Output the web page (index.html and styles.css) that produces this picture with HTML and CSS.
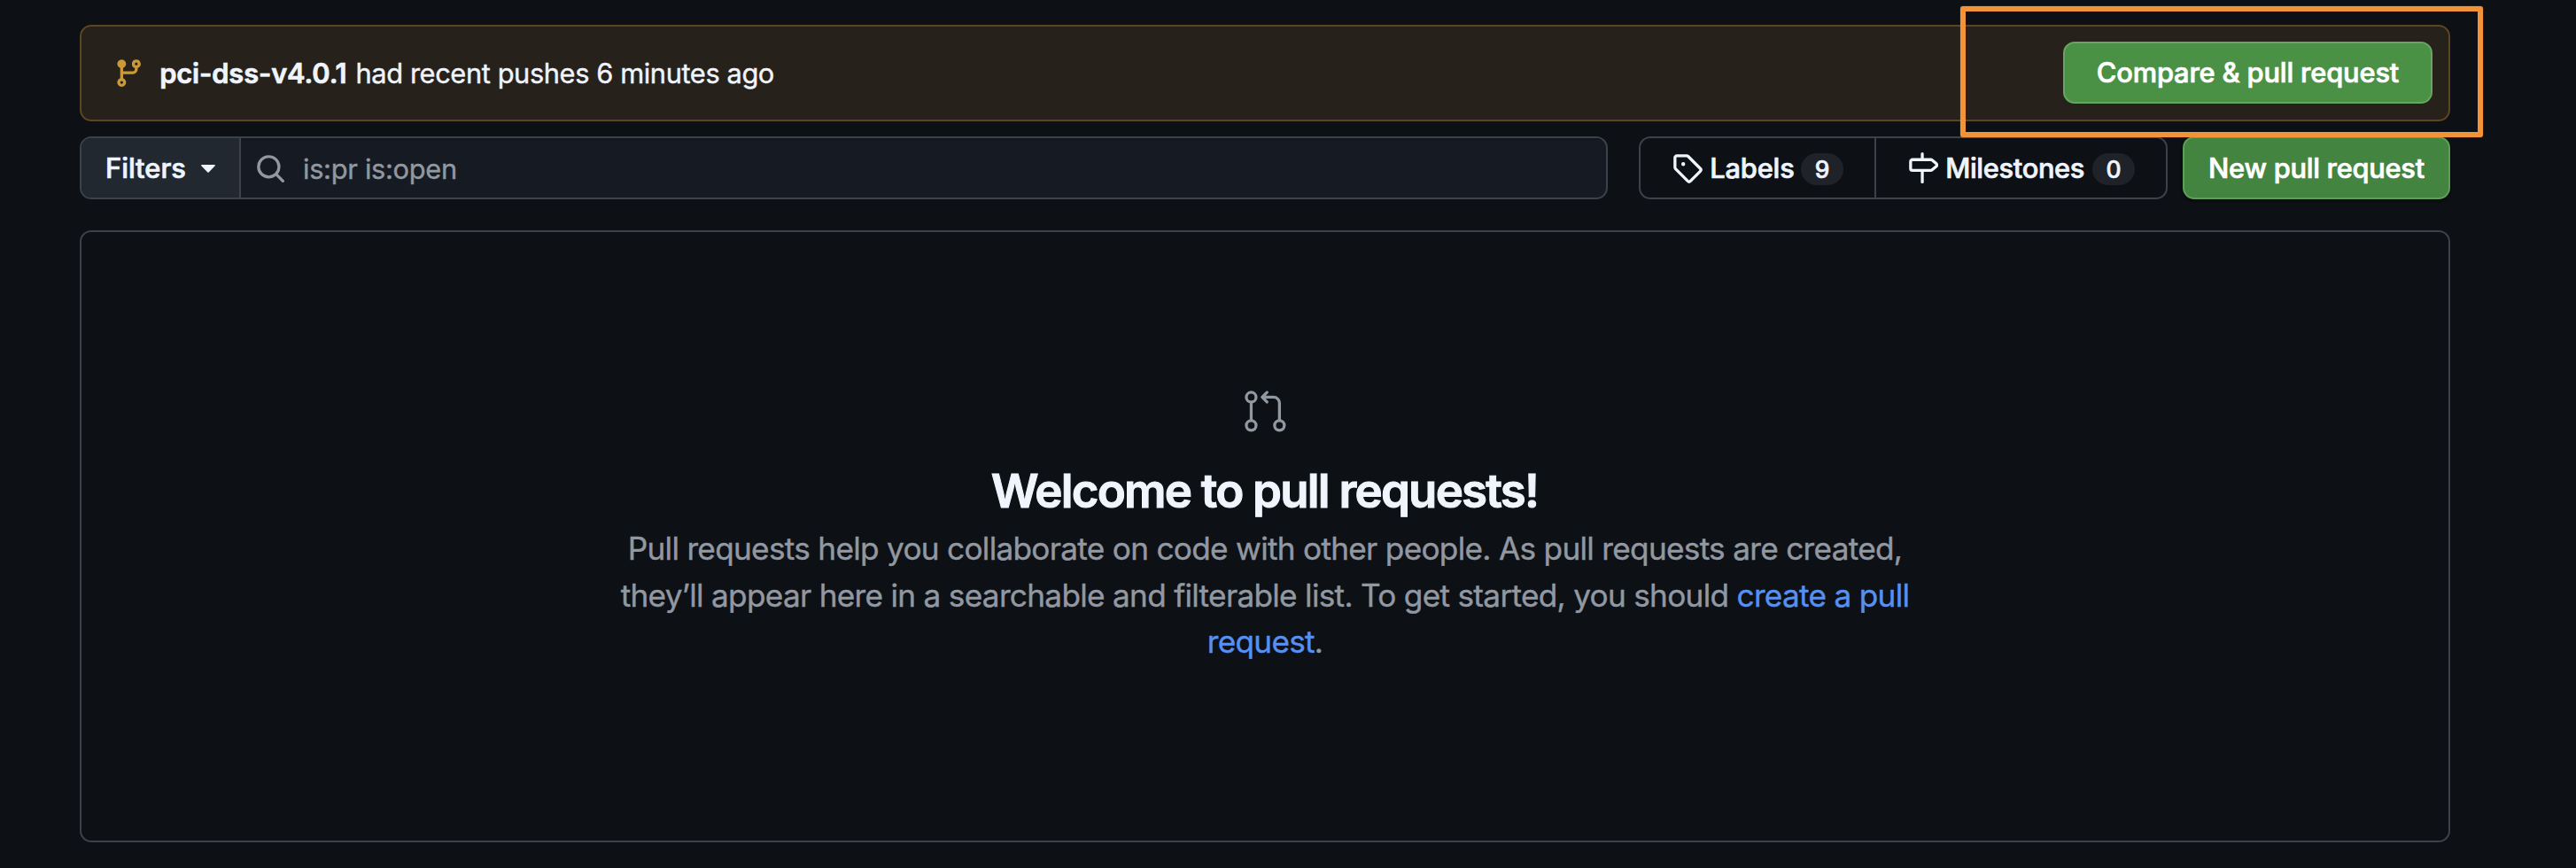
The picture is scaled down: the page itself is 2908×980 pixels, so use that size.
FILE: index.html
```html
<!DOCTYPE html>
<html lang="en">
<head>
<meta charset="utf-8">
<title>Pull requests</title>
<link rel="stylesheet" href="styles.css">
</head>
<body>
<main class="page">
  <section class="banner">
    <svg class="icon icon-branch" viewBox="0 0 16 16"><path d="M11.75 2.5a.75.75 0 100 1.5.75.75 0 000-1.5zm-2.25.75a2.25 2.25 0 113 2.122V6A2.5 2.5 0 0110 8.5H5v2.128a2.251 2.251 0 11-1.5 0V5.372a2.25 2.25 0 111.5 0V7h5a1 1 0 001-1v-.628A2.25 2.25 0 019.5 3.25zM4.25 12a.75.75 0 100 1.5.75.75 0 000-1.5zM3.5 3.25a.75.75 0 111.5 0 .75.75 0 01-1.5 0z"/></svg>
    <p class="banner-text"><strong class="branch">pci-dss-v4.0.1</strong><span class="pushes">had recent pushes 6 minutes ago</span></p>
    <button class="btn btn-compare">Compare &amp; pull request</button>
    <div class="callout"></div>
  </section>

  <div class="toolbar">
    <div class="search">
      <button class="filters">Filters<svg class="caret" viewBox="0 0 16 9"><path d="M.8 0h14.4c.7 0 1 .8.5 1.3L8.7 8.4a1 1 0 0 1-1.4 0L.3 1.3C-.2.8.1 0 .8 0Z"/></svg></button>
      <div class="field">
        <svg class="icon" viewBox="0 0 16 16"><path d="M10.68 11.74a6 6 0 0 1-7.922-8.982 6 6 0 0 1 8.982 7.922l3.04 3.04a.749.749 0 0 1-.326 1.275.749.749 0 0 1-.734-.215ZM11.5 7a4.499 4.499 0 1 0-8.997 0A4.499 4.499 0 0 0 11.5 7Z"/></svg>
        <span class="query">is:pr is:open</span>
      </div>
    </div>
    <nav class="subnav">
      <a class="subnav-item labels"><svg class="icon" viewBox="0 0 16 16"><path d="M1 7.775V2.75C1 1.784 1.784 1 2.75 1h5.025c.464 0 .91.184 1.238.513l6.25 6.25a1.75 1.75 0 0 1 0 2.474l-5.026 5.026a1.75 1.75 0 0 1-2.474 0l-6.25-6.25A1.752 1.752 0 0 1 1 7.775Zm1.5 0c0 .066.026.13.073.177l6.25 6.25a.25.25 0 0 0 .354 0l5.025-5.025a.25.25 0 0 0 0-.354l-6.25-6.25a.25.25 0 0 0-.177-.073H2.75a.25.25 0 0 0-.25.25ZM6 5a1 1 0 1 1 0 2 1 1 0 0 1 0-2Z"/></svg><span class="name">Labels</span><span class="count">9</span></a>
      <a class="subnav-item milestones"><svg class="icon" viewBox="0 0 16 16"><path d="M7.75 0a.75.75 0 0 1 .75.75V3h3.634c.414 0 .814.147 1.13.414l2.07 1.75a1.75 1.75 0 0 1 0 2.672l-2.07 1.75a1.75 1.75 0 0 1-1.13.414H8.5v5.25a.75.75 0 0 1-1.5 0V10H2.75A1.75 1.75 0 0 1 1 8.25v-3.5C1 3.784 1.784 3 2.75 3H7V.75A.75.75 0 0 1 7.75 0Zm4.384 8.5a.25.25 0 0 0 .161-.059l2.07-1.75a.25.25 0 0 0 0-.382l-2.07-1.75a.25.25 0 0 0-.161-.059H2.75a.25.25 0 0 0-.25.25v3.5c0 .138.112.25.25.25h9.384Z"/></svg><span class="name">Milestones</span><span class="count">0</span></a>
    </nav>
    <button class="btn btn-new">New pull request</button>
  </div>

  <section class="blankslate">
    <svg class="icon-pr" viewBox="0 0 24 24"><path d="M16 19.25a3.25 3.25 0 1 1 6.5 0 3.25 3.25 0 0 1-6.5 0Zm-14.5 0a3.25 3.25 0 1 1 6.5 0 3.25 3.25 0 0 1-6.5 0Zm0-14.5a3.25 3.25 0 1 1 6.5 0 3.25 3.25 0 0 1-6.5 0ZM4.75 3a1.75 1.75 0 1 0 .001 3.501A1.75 1.75 0 0 0 4.75 3Zm0 14.5a1.75 1.75 0 1 0 .001 3.501A1.75 1.75 0 0 0 4.75 17.5Zm14.5 0a1.75 1.75 0 1 0 .001 3.501 1.75 1.75 0 0 0-.001-3.501Z"/><path d="M13.405 1.72a.75.75 0 0 1 0 1.06L12.185 4h4.065A3.75 3.75 0 0 1 20 7.75v8.75a.75.75 0 0 1-1.5 0V7.75a2.25 2.25 0 0 0-2.25-2.25h-4.064l1.22 1.22a.75.75 0 0 1-1.061 1.06l-2.5-2.5a.75.75 0 0 1 0-1.06l2.5-2.5a.75.75 0 0 1 1.06 0ZM4.75 7.25A.75.75 0 0 1 5.5 8v8A.75.75 0 0 1 4 16V8a.75.75 0 0 1 .75-.75Z"/></svg>
    <h1 class="title">Welcome to pull requests!</h1>
    <p class="lead">Pull requests help you collaborate on code with other people. As pull requests are created,<br>they’ll appear here in a searchable and filterable list. To get started, you should <a class="link">create a pull<br>request</a>.</p>
  </section>
</main>
</body>
</html>
```
FILE: styles.css
```css
* { box-sizing: border-box; }

body {
  margin: 0;
  background: #0d1014;
  color: #f0f5fd;
  font: 400 30.8px/46px Inter, "Liberation Sans", sans-serif;
  -webkit-text-stroke: .4px currentColor;
}

.page {
  width: 2908px;
  height: 980px;
  padding: 28px 142px 0 90px;
  overflow: hidden;
}

p, h1 { margin: 0; }

.icon {
  flex: none;
  width: 35.2px;
  height: 35.2px;
  fill: currentColor;
}

.banner {
  position: relative;
  display: flex;
  align-items: center;
  height: 109px;
  padding: 0 18px 0 35.6px;
  border: 2px solid #5c4521;
  border-radius: 13px;
  background: #27211c;
}

.icon-branch { color: #cb9a37; }

.banner-text {
  display: flex;
  flex: 1;
  gap: 10px;
  margin-left: 17.4px;
}

.branch { font-weight: 600; letter-spacing: -.12px; -webkit-text-stroke-width: .7px; }
.pushes { letter-spacing: -.4px; }

.btn {
  height: 71px;
  padding: 0;
  border: 2px solid #5e9f58;
  border-radius: 13px;
  color: #fff;
  font: 500 30.8px/46px Inter, "Liberation Sans", sans-serif;
  -webkit-text-stroke: .7px #fff;
  white-space: nowrap;
}

.btn-compare {
  width: 417px;
  height: 70px;
  margin-bottom: 1px;
  background: #4a9146;
  border-color: #66a562;
  letter-spacing: -.156px;
}

.btn-new {
  width: 302px;
  margin-left: 17px;
  background: #438440;
  letter-spacing: -.264px;
  box-shadow: 0 2px 3px rgba(0, 0, 0, .5);
}

/* Highlight frame around the compare button */
.callout {
  position: absolute;
  top: -23px;
  left: 2121px;
  width: 589.5px;
  height: 148px;
  border: 6px solid #f29337;
  border-radius: 3px;
  box-shadow: 0 0 1px #f29337;
}

.toolbar {
  display: flex;
  height: 71px;
  margin-top: 17px;
}

.search {
  display: flex;
  width: 1725px;
  border: 2px solid #3d424a;
  border-radius: 13px;
  background: #161b23;
  overflow: hidden;
}

.filters {
  display: flex;
  align-items: center;
  width: 180px;
  padding: 0 0 0 27px;
  border: 0;
  border-right: 2px solid #3d424a;
  background: #212830;
  color: inherit;
  font: 500 30.8px/46px Inter, "Liberation Sans", sans-serif;
  -webkit-text-stroke: .7px currentColor;
}

.caret {
  width: 16px;
  height: 9px;
  margin: 2px 0 0 17px;
  fill: currentColor;
}

.field {
  display: flex;
  flex: 1;
  align-items: center;
  gap: 19px;
  padding: 2px 0 0 15.8px;
  color: #9298a1;
  box-shadow: inset 0 2px 0 #12161b;
}

.query { letter-spacing: -.297px; }

.subnav {
  display: flex;
  width: 597px;
  margin-left: 35px;
  border: 2px solid #3d424a;
  border-radius: 13px;
}

.subnav-item {
  display: flex;
  align-items: center;
  font-weight: 500;
}

.subnav-item .name { margin-left: 8px; -webkit-text-stroke-width: .7px; }
.labels { width: 266px; padding-left: 35px; border-right: 2px solid #3d424a; }
.labels .name { width: 102.8px; letter-spacing: -.158px; }
.milestones { padding-left: 35px; }
.milestones .name { width: 165.8px; letter-spacing: -.34px; }

.count {
  width: 48px;
  height: 36px;
  margin-top: 3px;
  border-radius: 18px;
  background: #1f2228;
  font-size: 26.4px;
  line-height: 36px;
  text-align: center;
  -webkit-text-stroke-width: .6px;
}

.blankslate {
  display: flex;
  flex-direction: column;
  align-items: center;
  height: 691px;
  margin-top: 35px;
  padding-top: 176px;
  border: 2px solid #3d424a;
  border-radius: 13px;
}

.icon-pr { flex: none; width: 52.8px; height: 52.8px; fill: #9298a1; }

.title {
  margin-top: 30px;
  margin-right: 1px;
  font-size: 52.8px;
  line-height: 66px;
  font-weight: 600;
  letter-spacing: -1.77px;
  -webkit-text-stroke-width: 1px;
  white-space: nowrap;
}

.lead {
  margin-top: 6px;
  color: #9298a1;
  font-size: 35.2px;
  line-height: 52.8px;
  letter-spacing: -.71px;
  text-align: center;
  white-space: nowrap;
}

.link { color: #5890f0; -webkit-text-stroke-color: #5890f0; }
```
